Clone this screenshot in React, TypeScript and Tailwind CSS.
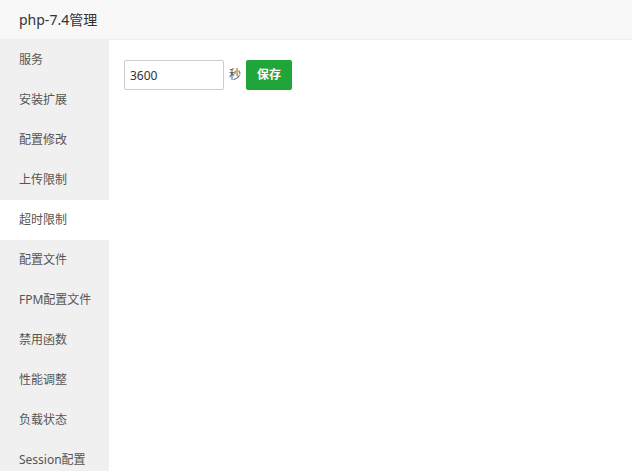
const items = [
  "服务",
  "安装扩展",
  "配置修改",
  "上传限制",
  "超时限制",
  "配置文件",
  "FPM配置文件",
  "禁用函数",
  "性能调整",
  "负载状态",
  "Session配置",
];

const font = { fontFamily: '"Microsoft YaHei", "Noto Sans", "Noto Sans CJK SC", sans-serif' };

export default function App() {
  return (
    <div className="w-[632px] h-[471px] overflow-hidden bg-white flex flex-col" style={font}>
      <div className="h-[40px] shrink-0 bg-[#f8f8f8] border-b border-[#eeeeee] flex items-center pl-[19px] text-[14px] text-[#333]">
        php-7.4管理
      </div>
      <div className="flex flex-1 min-h-0">
        <div className="w-[109px] shrink-0 bg-[#f0f0f0] flex flex-col">
          {items.map((t, i) => (
            <div
              key={t}
              className={`h-[40px] shrink-0 flex items-center pl-[19px] text-[12px] text-[#555] ${i === 4 ? "bg-white" : ""}`}
            >
              {t}
            </div>
          ))}
        </div>
        <div className="flex-1 pt-[20px] pl-[15px]">
          <div className="flex items-center">
            <input
              defaultValue="3600"
              className="w-[100px] h-[30px] border border-[#cccccc] rounded-[2px] px-[5px] text-[12px] text-[#333] outline-none"
              style={font}
            />
            <span className="ml-[5px] text-[12px] text-[#555]">秒</span>
            <button className="ml-[5px] w-[46px] h-[30px] bg-[#20a53a] rounded-[2px] text-white text-[12px] font-bold">
              保存
            </button>
          </div>
        </div>
      </div>
    </div>
  );
}
